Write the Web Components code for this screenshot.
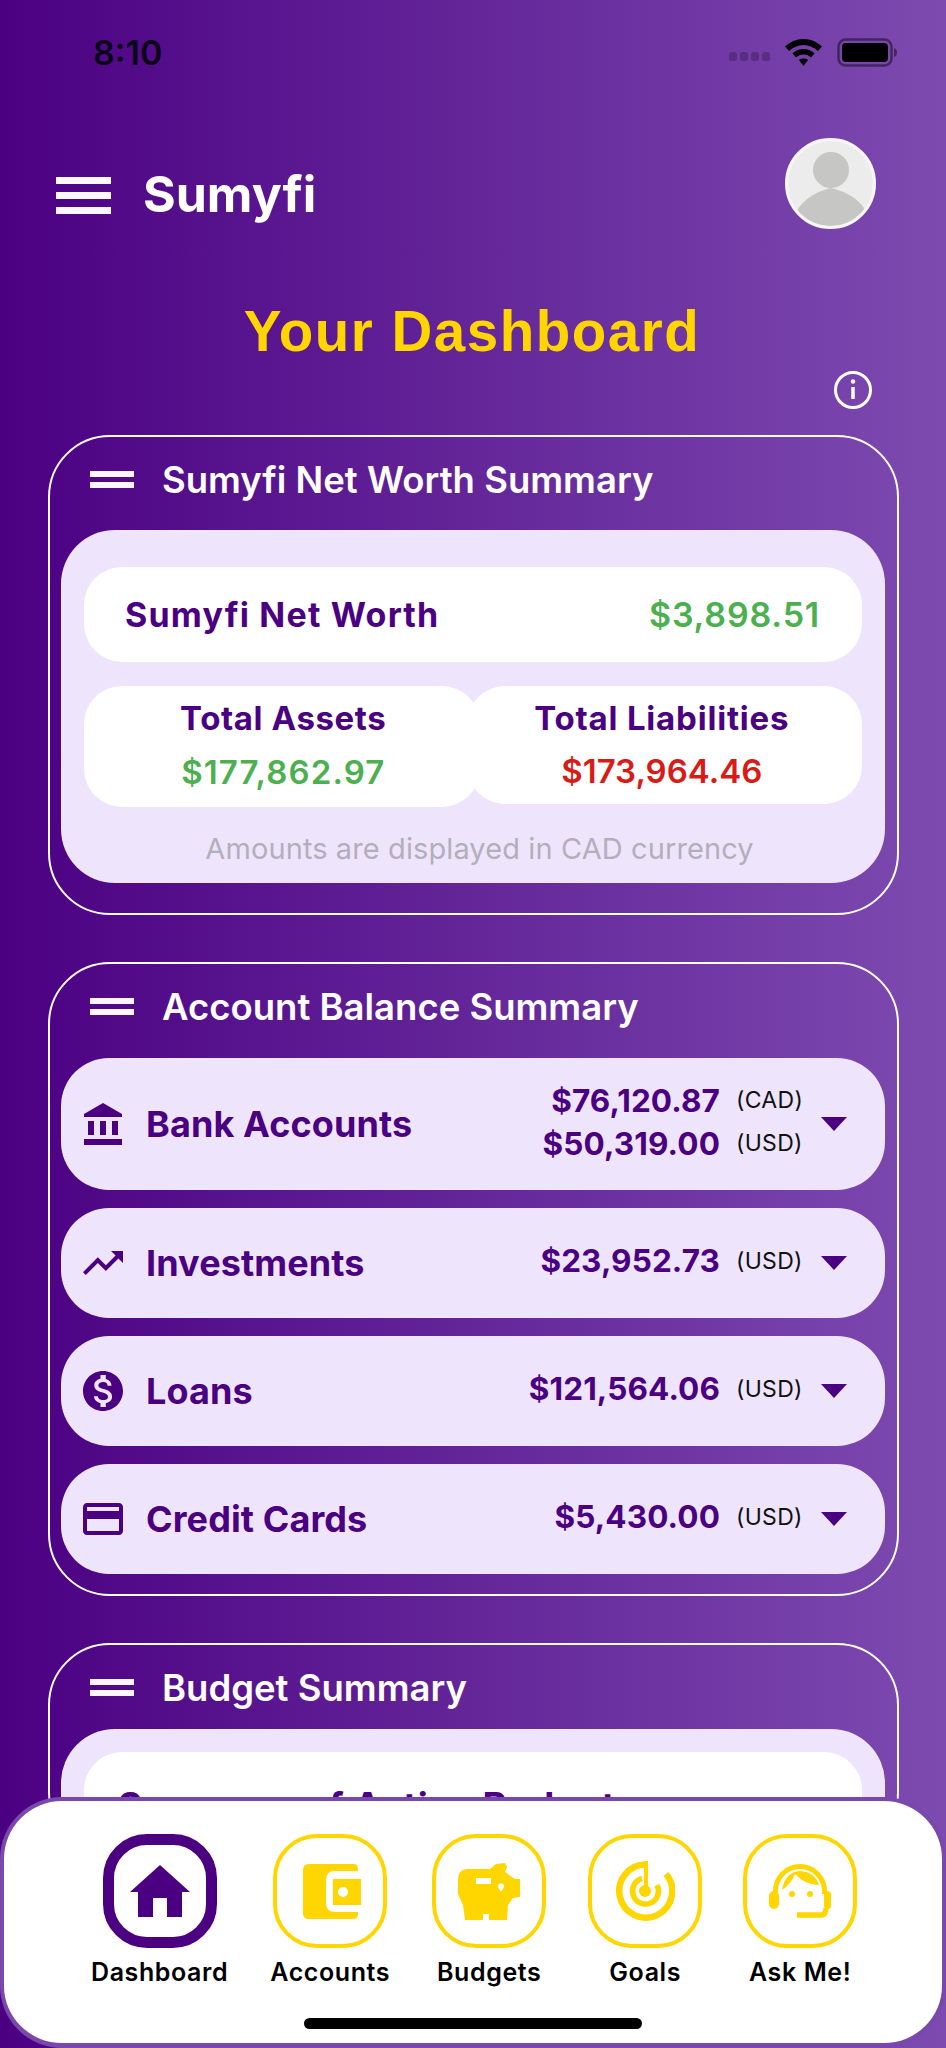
<!DOCTYPE html>
<html>
<head>
<meta charset="utf-8">
<title>Sumyfi</title>
<style>
  html, body { margin: 0; height: 2048px; overflow: hidden; }
  body {
    position: relative;
    background: linear-gradient(90deg, #4b0082 0%, #7d4bb0 100%);
    font-family: Inter, "Liberation Sans", sans-serif;
  }
</style>
</head>
<body>
<app-status></app-status>
<app-header></app-header>
<dash-title></dash-title>

<summary-card heading="Sumyfi Net Worth Summary" style="margin-top:9px" pad="30" top="9">
  <net-worth></net-worth>
</summary-card>

<summary-card heading="Account Balance Summary" style="margin-top:47px" gap="18" pad="20" top="10">
  <balance-row label="Bank Accounts" icon="bank" tall>
    <balance-amount value="$76,120.87" cur="CAD"></balance-amount>
    <balance-amount value="$50,319.00" cur="USD"></balance-amount>
  </balance-row>
  <balance-row label="Investments" icon="trend">
    <balance-amount value="$23,952.73" cur="USD"></balance-amount>
  </balance-row>
  <balance-row label="Loans" icon="dollar">
    <balance-amount value="$121,564.06" cur="USD"></balance-amount>
  </balance-row>
  <balance-row label="Credit Cards" icon="card">
    <balance-amount value="$5,430.00" cur="USD"></balance-amount>
  </balance-row>
</summary-card>

<summary-card heading="Budget Summary" style="margin-top:47px" top="0">
  <budget-box></budget-box>
</summary-card>

<tab-bar>
  <tab-item label="Dashboard" icon="home" active></tab-item>
  <tab-item label="Accounts" icon="wallet" style="margin-left:1px"></tab-item>
  <tab-item label="Budgets" icon="piggy" style="margin-left:1px"></tab-item>
  <tab-item label="Goals" icon="goal" style="margin-left:1px"></tab-item>
  <tab-item label="Ask Me!" icon="agent"></tab-item>
</tab-bar>

<script>
const ICONS = {
  bank: '<svg viewBox="0 0 38 42" width="38" height="42" fill="#4b0082"><path d="M19 0 38 11v3H0v-3z"/><rect y="36" width="38" height="6"/><rect x="4" y="18" width="6" height="14"/><rect x="16" y="18" width="6" height="14"/><rect x="28" y="18" width="6" height="14"/></svg>',
  trend: '<svg viewBox="2 6 20 12" width="40" height="24" fill="#4b0082"><path d="M16 6l2.290 2.290-4.880 4.880-4-4L2 16.590 3.410 18l6-6 4 4 6.300-6.290L22 12V6z"/></svg>',
  dollar: '<svg viewBox="2 2 20 20" width="40" height="40" fill="#4b0082"><path d="M12 2C6.480 2 2 6.480 2 12s4.480 10 10 10 10-4.480 10-10S17.520 2 12 2zm1.410 16.090V20h-2.670v-1.930c-1.710-.360-3.160-1.460-3.270-3.400h1.960c.100 1.050.820 1.870 2.650 1.870 1.960 0 2.400-.980 2.400-1.590 0-.830-.440-1.610-2.670-2.140-2.480-.600-4.180-1.620-4.180-3.670 0-1.720 1.390-2.840 3.110-3.210V4h2.670v1.950c1.860.450 2.790 1.860 2.870 3.390H14.300c-.050-1.110-.640-1.870-2.220-1.870-1.500 0-2.400.680-2.400 1.640 0 .840.650 1.390 2.670 1.910s4.180 1.390 4.180 3.910c-.010 1.830-1.380 2.840-3.120 3.160z"/></svg>',
  card: '<svg viewBox="2 4 20 16" width="40" height="32" fill="#4b0082"><path d="M20 4H4c-1.110 0-1.990.890-1.990 2L2 18c0 1.110.890 2 2 2h16c1.110 0 2-.890 2-2V6c0-1.110-.890-2-2-2zm0 14H4v-6h16v6zm0-10H4V6h16v2z"/></svg>',
  home: '<svg viewBox="0 0 60 52" width="60" height="52" fill="#4b0082"><path d="M30 0 60 27H52V52H37V33H23V52H8V27H0z"/></svg>',
  wallet: '<svg viewBox="0 0 58 55" width="58" height="55" style="margin-left:3px"><path fill="#ffd600" d="M6 0H50Q55 0 55 5V7H32Q23 7 23 16V39Q23 48 32 48H55V50Q55 55 50 55H6Q0 55 0 49V6Q0 0 6 0Z"/><path fill="#ffd600" d="M30 15H58V41H30Z"/><circle cx="40" cy="28" r="5" fill="#fff"/></svg>',
  piggy: '<svg viewBox="0 0 62 57" width="62" height="57" fill="#ffd600"><path d="M10 6H32L38 1 47 0 49 4 47 9 54 14 57 16H62V34L55 35 50 42 49 57H31V51H25V57H7L5 42 0 31V17Q0 6 10 6Z"/><rect x="18" y="15" width="15" height="6" fill="#fff"/><path fill="#fff" d="M43 20.500a3 3 0 0 1 3 3c0 2-2 3-3 5.500-1-2.500-3-3.500-3-5.500a3 3 0 0 1 3-3z"/></svg>',
  goal: '<svg viewBox="0 0 60 60" width="60" height="60" fill="none" stroke="#ffd600" stroke-width="6.500"><path d="M31 3.600A26.500 26.500 0 1 0 51 13"/><path d="M27 17.500A13 13 0 1 0 42 24" stroke-width="5.500"/><path d="M31 0V27" stroke-width="4"/><circle cx="30" cy="30" r="6" fill="#ffd600" stroke="none"/></svg>',
  agent: '<svg viewBox="0 0 62 54" width="62" height="54"><path fill="none" stroke="#ffd600" stroke-width="5" d="M6.500 30V27A24.500 24.500 0 0 1 55.500 27V30"/><rect y="27" width="10" height="18" rx="5" fill="#ffd600"/><rect x="55" y="27" width="7" height="18" rx="3.500" fill="#ffd600"/><path fill="#ffd600" d="M13 26Q16 8 31 7 46 8 50 21 36 21 26 10 22 20 13 26Z"/><circle cx="23" cy="30" r="3" fill="#ffd600"/><circle cx="41" cy="30" r="3" fill="#ffd600"/><path fill="none" stroke="#ffd600" stroke-width="5.500" d="M28 51H52Q57 51 57 44"/></svg>'
};

class AppStatus extends HTMLElement {
  constructor() {
    super();
    this.attachShadow({ mode: 'open' }).innerHTML = `
      <style>
        :host { display: flex; align-items: center; height: 52px; padding: 26px 49px 0 93px; }
        .time { font-size: 34px; font-weight: 600; color: #0a0418; flex: 1; }
        .icons { display: flex; align-items: center; gap: 15px; }
        .sig { display: flex; gap: 2.500px; align-self: flex-end; margin-bottom: 6px; }
        .sig i { width: 8.500px; height: 9px; background: rgba(0,0,0,.22); border-radius: 2.500px; }
      </style>
      <div class="time">8:10</div>
      <div class="icons">
        <div class="sig"><i></i><i></i><i></i><i></i></div>
        <svg width="37" height="27" viewBox="0 0 37 27" fill="#000"><path d="M18.500 0C26 0 32 3 37 7.500L33 12C29 8.500 24 6 18.500 6S8 8.500 4 12L0 7.500C5 3 11 0 18.500 0Z"/><path d="M18.500 10C23 10 26.500 11.500 29.500 14.500L26 18.500C24 16.500 21.500 15.500 18.500 15.500S13 16.500 11 18.500L7.500 14.500C10.500 11.500 14 10 18.500 10Z"/><path d="M18.500 19.500C20.500 19.500 22 20 23 21L18.500 27 14 21C15 20 16.500 19.500 18.500 19.500Z"/></svg>
        <svg width="60" height="29" viewBox="0 0 60 29"><rect x="1.500" y="1.500" width="53" height="26" rx="7" fill="none" stroke="#000" stroke-opacity=".45" stroke-width="2.500"/><rect x="5" y="5" width="46" height="19" rx="4" fill="#000"/><path d="M57 10Q60 11 60 14.500T57 19Z" fill="#000" fill-opacity=".45"/></svg>
      </div>`;
  }
}

class AppHeader extends HTMLElement {
  constructor() {
    super();
    this.attachShadow({ mode: 'open' }).innerHTML = `
      <style>
        :host { display: flex; align-items: center; padding: 59px 70px 0 56px; height: 92px; }
        .burger { width: 55px; display: flex; flex-direction: column; gap: 8px; margin: 24px 32px 0 0; }
        .burger i { height: 7px; background: #fdf7ff; }
        .name { font-size: 50px; font-weight: 700; color: #fff; flex: 1; margin-top: 22px; }
        .avatar { width: 91px; height: 91px; border-radius: 50%; background: #ececec; border: 3px solid #f8f6fb; box-sizing: border-box; overflow: hidden; }
        svg { display: block; margin: -3px; }
      </style>
      <div class="burger"><i></i><i></i><i></i></div>
      <div class="name">Sumyfi</div>
      <div class="avatar"><svg viewBox="0 0 91 91" width="91" height="91"><circle cx="46" cy="32" r="18" fill="#c6c6c4"/><path d="M0 91 8 80C16 62 30 54 46 50 62 54 78 62 84 80L91 91Z" fill="#c6c6c4"/></svg></div>`;
  }
}

class DashTitle extends HTMLElement {
  constructor() {
    super();
    this.attachShadow({ mode: 'open' }).innerHTML = `
      <style>
        :host { display: block; position: relative; padding-top: 71px; height: 126px; }
        h1 { margin: 0; text-align: center; width: 944px; font: 700 56.500px/64px "Liberation Sans", sans-serif; color: #ffd500; letter-spacing: 1.500px; }
        .info { display: block; margin: 7px 0 0 834px; }
      </style>
      <h1>Your Dashboard</h1>
      <svg class="info" width="38" height="38" viewBox="0 0 38 38" fill="none" stroke="#fff"><circle cx="19" cy="19" r="17.500" stroke-width="3"/><path d="M19 16v12" stroke-width="3.500"/><circle cx="19" cy="10.500" r="2.200" fill="#fff" stroke="none"/></svg>`;
  }
}

class SummaryCard extends HTMLElement {
  constructor() {
    super();
    const gap = this.getAttribute('gap') || 0;
    const pad = this.getAttribute('pad') || 0;
    const top = this.getAttribute('top') || 0;
    this.attachShadow({ mode: 'open' }).innerHTML = `
      <style>
        :host { display: block; margin: 0 47px 0 48px; border: 2px solid #fff; border-radius: 62px; padding: 0 12px ${pad}px 11px; box-sizing: border-box; }
        .head { display: flex; align-items: center; height: 85px; margin-bottom: -1px; }
        .bars { width: 44px; margin-left: 29px; margin-right: 28px; display: flex; flex-direction: column; gap: 5px; }
        .bars i { height: 6px; background: #fbf5ff; }
        h2 { margin: 0; font-size: 36.500px; font-weight: 600; color: #fff; white-space: nowrap; }
        .body { display: flex; flex-direction: column; gap: ${gap}px; margin-top: ${top}px; }
      </style>
      <div class="head"><div class="bars"><i></i><i></i></div><h2>${this.getAttribute('heading')}</h2></div>
      <div class="body"><slot></slot></div>`;
  }
}

class NetWorth extends HTMLElement {
  constructor() {
    super();
    this.attachShadow({ mode: 'open' }).innerHTML = `
      <style>
        :host { display: block; background: #eee5fd; border-radius: 54px; padding: 37px 23px 0; height: 353px; box-sizing: border-box; }
        .top { display: flex; justify-content: space-between; align-items: center; height: 95px; background: #fff; border-radius: 38px; padding: 0 42px 0 41px; font-size: 34px; font-weight: 600; letter-spacing: .8px; }
        .top b { color: #4b0082; font-weight: 700; letter-spacing: 1.200px; }
        .top span { color: #4caf50; }
        .cols { display: flex; margin-top: 24px; height: 121px; }
        .col { width: 397px; height: 121px; background: #fff; border-radius: 38px; display: flex; flex-direction: column; align-items: center; box-sizing: border-box; padding: 12px 0 0 3px; font-size: 33px; font-weight: 700; letter-spacing: .6px; }
        .col + .col { margin-left: -13px; height: 118px; padding: 12px 5px 0 0; letter-spacing: .8px; }
        .col b { color: #4b0082; font-weight: 700; }
        .col span { margin-top: 14px; font-weight: 600; letter-spacing: 1.100px; }
        .col + .col span { margin-top: 13px; letter-spacing: 0; }
        .g { color: #4caf50; } .r { color: #d81b16; }
        .note { margin: 24px 0 0; padding-left: 13px; text-align: center; font-size: 29px; font-weight: 400; color: #b3afba; letter-spacing: .1px; }
      </style>
      <div class="top"><b>Sumyfi Net Worth</b><span>$3,898.51</span></div>
      <div class="cols">
        <div class="col"><b>Total Assets</b><span class="g">$177,862.97</span></div>
        <div class="col"><b>Total Liabilities</b><span class="r">$173,964.46</span></div>
      </div>
      <p class="note">Amounts are displayed in CAD currency</p>`;
  }
}

class BalanceRow extends HTMLElement {
  constructor() {
    super();
    const tall = this.hasAttribute('tall');
    this.attachShadow({ mode: 'open' }).innerHTML = `
      <style>
        :host { display: flex; align-items: center; height: ${tall ? 132 : 110}px; background: #eee5fd; border-radius: 48px; padding-left: 22px; padding-right: 38px; }
        .ic { width: 40px; display: flex; justify-content: center; margin-right: 23px; }
        svg { display: block; }
        .lbl { flex: 1; font-size: 36px; font-weight: 700; color: #4b0082; letter-spacing: .1px; }
        .vals { display: flex; flex-direction: column; gap: 7px; margin: -5px 19px 0 0; }
        .caret { width: 0; height: 0; border-left: 13px solid transparent; border-right: 13px solid transparent; border-top: 14px solid #4b0082; }
      </style>
      <div class="ic">${ICONS[this.getAttribute('icon')]}</div>
      <div class="lbl">${this.getAttribute('label')}</div>
      <div class="vals"><slot></slot></div>
      <div class="caret"></div>`;
  }
}

class BalanceAmount extends HTMLElement {
  constructor() {
    super();
    this.attachShadow({ mode: 'open' }).innerHTML = `
      <style>
        :host { display: flex; justify-content: flex-end; align-items: center; height: 36px; }
        b { font-size: 31.500px; font-weight: 700; color: #4b0082; letter-spacing: .1px; }
        span { width: 66px; margin-left: 16px; font-size: 23px; color: #111; letter-spacing: .3px; white-space: nowrap; }
      </style>
      <b>${this.getAttribute('value')}</b><span>(${this.getAttribute('cur')})</span>`;
  }
}

class BudgetBox extends HTMLElement {
  constructor() {
    super();
    this.attachShadow({ mode: 'open' }).innerHTML = `
      <style>
        :host { display: block; background: #eee5fd; border-radius: 54px 54px 0 0; padding: 23px 23px 0; height: 100px; }
        div { background: #fff; border-radius: 38px 38px 0 0; height: 77px; padding: 31px 0 0 34px; box-sizing: border-box; font-size: 37px; font-weight: 700; color: #4b0082; letter-spacing: .6px; white-space: nowrap; }
      </style>
      <div>Summary of Active Budgets</div>`;
  }
}

class TabBar extends HTMLElement {
  constructor() {
    super();
    this.attachShadow({ mode: 'open' }).innerHTML = `
      <style>
        :host { position: absolute; left: 0; right: 0; top: 1797px; height: 251px; box-sizing: border-box; background: #fff; border: 4px solid #7a48ad; border-bottom-width: 5px; border-radius: 62px; }
        .items { display: flex; gap: 41px; padding: 33px 0 0 87px; }
        .home { position: absolute; left: 300px; top: 217px; width: 338px; height: 11px; border-radius: 6px; background: #000; }
      </style>
      <div class="items"><slot></slot></div>
      <div class="home"></div>`;
  }
}

class TabItem extends HTMLElement {
  constructor() {
    super();
    const active = this.hasAttribute('active');
    this.attachShadow({ mode: 'open' }).innerHTML = `
      <style>
        :host { display: flex; flex-direction: column; align-items: center; min-width: 114px; }
        .tile { width: 114px; height: 114px; box-sizing: border-box; border: ${active ? '11px solid #4b0082' : '4.500px solid #ffd600'}; border-radius: 44px; display: flex; align-items: center; justify-content: center; }
        svg { display: block; }
        .t { margin-top: 9px; font-size: 25px; font-weight: 600; color: #000; letter-spacing: .6px; white-space: nowrap; }
      </style>
      <div class="tile">${ICONS[this.getAttribute('icon')]}</div>
      <div class="t">${this.getAttribute('label')}</div>`;
  }
}

customElements.define('app-status', AppStatus);
customElements.define('app-header', AppHeader);
customElements.define('dash-title', DashTitle);
customElements.define('summary-card', SummaryCard);
customElements.define('net-worth', NetWorth);
customElements.define('balance-row', BalanceRow);
customElements.define('balance-amount', BalanceAmount);
customElements.define('budget-box', BudgetBox);
customElements.define('tab-bar', TabBar);
customElements.define('tab-item', TabItem);
</script>
</body>
</html>
